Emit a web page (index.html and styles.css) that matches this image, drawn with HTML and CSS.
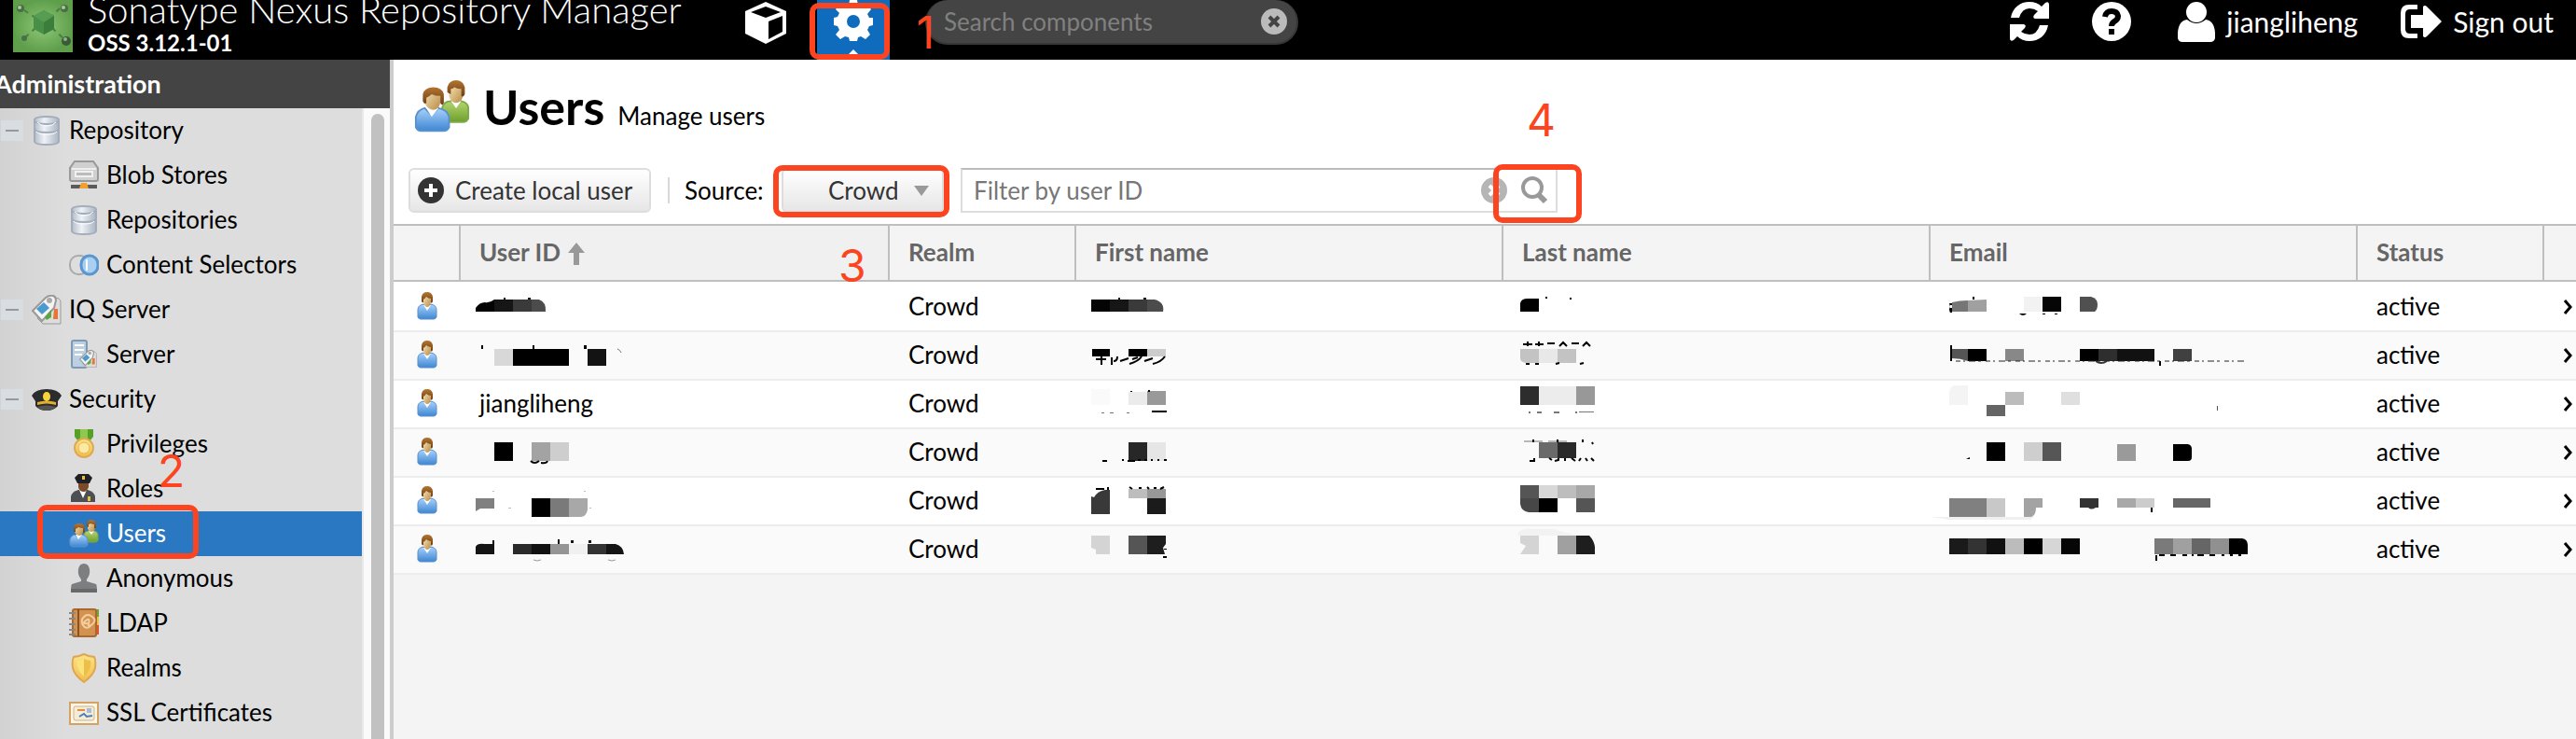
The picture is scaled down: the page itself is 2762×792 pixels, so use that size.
FILE: index.html
```html
<!DOCTYPE html>
<html lang="en">
<head>
<meta charset="utf-8">
<title>Users - Sonatype Nexus Repository Manager</title>
<link rel="stylesheet" href="styles.css">
</head>
<body>
<svg class="sprites" aria-hidden="true">
  <defs>
    <linearGradient id="hair" x1="0" y1="0" x2="0" y2="1"><stop offset="0" stop-color="#b5742f"/><stop offset="1" stop-color="#6b3f17"/></linearGradient>
    <linearGradient id="face" x1="0" y1="0" x2="1" y2="1"><stop offset="0" stop-color="#f7e6b8"/><stop offset="1" stop-color="#b88a45"/></linearGradient>
    <linearGradient id="blue" x1="0" y1="0" x2="0" y2="1"><stop offset="0" stop-color="#a9d2fb"/><stop offset="1" stop-color="#3e86d3"/></linearGradient>
    <linearGradient id="green" x1="0" y1="0" x2="0" y2="1"><stop offset="0" stop-color="#b4d66f"/><stop offset="1" stop-color="#6f9f2d"/></linearGradient>
    <linearGradient id="steel" x1="0" y1="0" x2="1" y2="0"><stop offset="0" stop-color="#b4bdc8"/><stop offset=".4" stop-color="#eef2f7"/><stop offset="1" stop-color="#aab4c1"/></linearGradient>
    <linearGradient id="gold" x1="0" y1="0" x2="0" y2="1"><stop offset="0" stop-color="#fbe48a"/><stop offset="1" stop-color="#f0bd4a"/></linearGradient>
    <radialGradient id="leaf"><stop offset="0" stop-color="#8fc878"/><stop offset="1" stop-color="#5f9f4c"/></radialGradient>
  </defs>
  <symbol id="i-user" viewBox="0 0 32 32">
    <path d="M6 28V20q0-5 6-6l4 4 4-4q6 1 6 6v8q-1 2-3 2H9q-2 0-3-2z" fill="url(#blue)" stroke="#5a90cc"/>
    <path d="M12 15h8l-4 6z" fill="#fff"/>
    <path d="M12 7q0-3 4-3t4 3v5q-1 5-4 5t-4-5z" fill="url(#face)"/>
    <path d="M10 11V6q1-5 6-5t6 5v5q-1 3-2 1V8q-3 0-5-2-1 2-3 3v3q-1 1-2-1z" fill="url(#hair)"/>
  </symbol>
  <symbol id="i-users" viewBox="0 0 32 32">
    <path d="M16 22v-5q1-4 5-4l3 3 3-3q4 1 4 4v6q-1 2-3 2H19z" fill="url(#green)" stroke="#7fa84a"/>
    <path d="M21 13h6l-3 4z" fill="#fff"/>
    <path d="M20 5q1-2 4-2t4 2v5q-1 4-4 4t-4-4z" fill="url(#face)"/>
    <path d="M19 8V5q1-4 5-4t5 4v4q-1 2-2 1V6q-2 0-4-1-1 1-2 1v3z" fill="url(#hair)"/>
    <path d="M1 28v-6q1-4 5-5l4 4 4-4q5 1 6 5v6q-1 2-3 2H4q-2 0-3-2z" fill="url(#blue)" stroke="#5a90cc"/>
    <path d="M7 17h7l-4 5z" fill="#fff"/>
    <path d="M6 9q1-3 4-3t5 3v5q-1 4-4 4t-5-4z" fill="url(#face)"/>
    <path d="M5 13V9q1-4 6-4t6 4v5q-1 2-2 0v-4q-3 0-5-1-1 1-3 2v3q-1 1-2-1z" fill="url(#hair)"/>
  </symbol>
  <symbol id="i-db" viewBox="0 0 32 32">
    <path d="M3 4q1-3 13-3t13 3v24q-1 3-13 3T3 28z" fill="url(#steel)" stroke="#a4aebb" stroke-width="2"/>
    <path d="M3 5q1 4 13 4t13-4M3 14q1 4 13 4t13-4" fill="none" stroke="#a4aebb" stroke-width="2"/>
    <path d="M5 17q2 3 11 3t11-3M6 7q3 4 10 4t10-4" fill="none" stroke="#fff"/>
  </symbol>
  <symbol id="i-tags" viewBox="0 0 32 32">
    <path d="M6 25l18-22q7 0 7 5v23H12z" fill="#ddd" stroke="#999"/>
    <path d="M1 17L15 3q4-3 8-2 3 1 3 5l-2 8-13 14z" fill="#f4f4f4" stroke="#999" stroke-width="2"/>
    <circle cx="19" cy="6" r="3" fill="#aaa"/>
    <path d="M5 15l8-7 6 6-8 7z" fill="#4a9ad0"/>
    <path d="M14 24l7-8v8l-5 3z" fill="#5ba640"/><path d="M24 15h4v11h-5z" fill="#e8743b"/>
  </symbol>
  <symbol id="i-go" viewBox="0 0 10 16">
    <path d="M2 1l6 7-6 7" fill="none" stroke="#000" stroke-width="3"/>
  </symbol>
</svg>

<header class="topbar">
  <div class="brand">
    <svg class="logo" viewBox="0 0 64 56" aria-hidden="true">
      <rect width="64" height="56" fill="url(#leaf)"/>
      <path d="M12 11l12 8M50 9l-8 8M13 40l10-9M42 30l14 13" stroke="#4a7f44" stroke-width="2" stroke-dasharray="5 5"/>
      <path d="M33 11l11 6v14l-11 6-11-6V17z" fill="#4a8f47"/><path d="M33 11l11 6-11 7-11-7z" fill="#569c52"/><path d="M33 24l11-7v14l-11 6z" fill="#3b7d3a"/>
      <circle cx="8" cy="9" r="4" fill="#4a6f46"/><circle cx="55" cy="9" r="4" fill="#4a6f46"/><circle cx="12" cy="41" r="3" fill="#4a6f46"/><circle cx="57" cy="44" r="5" fill="#3a5a38"/>
      <circle cx="7" cy="8" r="2" fill="#a9c9a0"/><circle cx="54" cy="8" r="2" fill="#a9c9a0"/><circle cx="56" cy="42" r="2" fill="#8fb088"/>
    </svg>
    <div class="names">
      <div class="product">Sonatype Nexus Repository Manager</div>
      <div class="version">OSS 3.12.1-01</div>
    </div>
  </div>
  <div class="modes">
    <button class="mode" aria-label="Browse">
      <svg viewBox="0 0 46 46" width="46" height="46"><path d="M23 1l22 10v24L23 46 1 35V11z" fill="#fff"/><path d="M23 6l16 6-16 6-16-6z" fill="#000"/><path d="M26 22l15-6v17l-15 8z" fill="#000"/></svg>
    </button>
    <button class="mode active" aria-label="Administration">
      <svg viewBox="0 0 42 44" width="42" height="44"><path fill="#fff" fill-rule="evenodd" d="M17 0h8l1 6 4 2 5-4 5 6-4 5 2 4h4v8l-4 1-2 4 3 5-5 5-5-3-3 1-1 4h-8l-1-4-4-1-5 3-5-5 4-5-2-4-4-1v-8l4-1 2-4-4-4 5-6 5 4 4-2zM21 16a7 7 0 1 0 0 14 7 7 0 1 0 0-14z"/></svg>
      <span class="pointer"></span>
      <span class="mark mark-mode"></span>
    </button>
    <span class="step step-1">1</span>
  </div>
  <div class="search">
    <input type="text" aria-label="Search components" placeholder="Search components">
    <button aria-label="Clear search"><svg viewBox="0 0 28 28" width="28" height="28"><circle cx="14" cy="14" r="14" fill="#bbb"/><path d="M9 9l10 10M19 9L9 19" stroke="#444" stroke-width="4"/></svg></button>
  </div>
  <div class="tools">
    <button aria-label="Refresh"><svg viewBox="0 0 42 44" width="42" height="44" fill="#fff"><path d="M1 18C3 7 11 1 21 1q8 0 13 5l4-4q4-2 4 2v15H27q-3-1-1-4l4-4q-4-3-9-3-8 0-11 10z"/><path d="M41 26C39 37 31 43 21 43q-8 0-13-5l-4 4q-4 2-4-2V25h15q3 1 1 4l-4 4q4 3 9 3 8 0 11-10z"/></svg></button>
    <button aria-label="Help"><svg viewBox="0 0 42 44" width="42" height="44"><circle cx="21" cy="22" r="21" fill="#fff"/><path d="M14 17q1-6 7-6t7 5q0 4-4 6-3 2-3 5" fill="none" stroke="#000" stroke-width="6"/><path d="M18 30h6v6h-6z"/></svg></button>
    <button><svg viewBox="0 0 40 44" width="40" height="44" fill="#fff"><ellipse cx="20" cy="12" rx="11" ry="11"/><path d="M10 20q10 8 20 0 9 1 10 14v6q-1 4-5 4H5q-4 0-5-4v-6q1-13 10-14z"/></svg>jiangliheng</button>
    <button><svg viewBox="0 0 44 36" width="44" height="36" fill="#fff"><path d="M18 0v5H10q-5 0-5 5v16q0 5 5 5h8v5H9q-9 0-9-9V9q0-9 9-9z"/><path d="M11 11h13V2q2-2 4 0l16 16-16 16q-2 2-4 0v-9H11z"/></svg>Sign out</button>
  </div>
</header>

<div class="workspace">
  <aside class="sidebar">
    <h2>Administration</h2>
    <div class="scroller">
      <nav aria-label="Administration">
        <ul class="tree">
          <li class="group"><button aria-label="Collapse Repository"></button><a href="#"><svg><use href="#i-db"/></svg><span>Repository</span></a></li>
          <li><a href="#"><svg viewBox="0 0 32 32"><path d="M6 1h20l5 7v12q0 2-2 2H3q-2 0-2-2V8z" fill="#d0d0d0" stroke="#999" stroke-width="2"/><path d="M3 9h26" stroke="#eee" stroke-width="2"/><path d="M7 12h18v5H7z" fill="#bbb" stroke="#f0f0f0" stroke-width="2"/><path d="M2 26h28v4H2z" fill="#5a5a5a"/><path d="M13 24h6l2 6H11z" fill="#f0a030"/></svg><span>Blob Stores</span></a></li>
          <li><a href="#"><svg><use href="#i-db"/></svg><span>Repositories</span></a></li>
          <li><a href="#"><svg viewBox="0 0 32 32"><rect x="1" y="6" width="20" height="20" rx="9" fill="#dedede" stroke="#aaa" stroke-width="2"/><rect x="13" y="6" width="18" height="20" rx="9" fill="#a9d0f2" stroke="#5b96d0" stroke-width="3"/><path d="M19 10v12" stroke="#fff" stroke-width="2"/></svg><span>Content Selectors</span></a></li>
          <li class="group"><button aria-label="Collapse IQ Server"></button><a href="#"><svg><use href="#i-tags"/></svg><span>IQ Server</span></a></li>
          <li><a href="#"><svg viewBox="0 0 32 32"><rect x="3" y="1" width="16" height="29" rx="2" fill="#bcd0e2" stroke="#7d99b4" stroke-width="2"/><path d="M6 6h10M6 11h10M6 16h8" stroke="#fff" stroke-width="2"/><use href="#i-tags" x="11" y="11" width="19" height="19"/></svg><span>Server</span></a></li>
          <li class="group"><button aria-label="Collapse Security"></button><a href="#"><svg viewBox="0 0 32 32"><path d="M0 12Q4 5 16 5t16 7l-4 6v5q-4 5-12 5T4 23v-5z" fill="#2c2c2e"/><path d="M6 19q10-3 20 0v3q-10-3-20 0z" fill="#e2b02c"/><ellipse cx="16" cy="13" rx="4" ry="5" fill="#f6d23d"/><path d="M6 24q10-3 20 0-4 4-10 4T6 24z" fill="#555"/></svg><span>Security</span></a></li>
          <li><a href="#"><svg viewBox="0 0 32 32"><path d="M6 0h20v8l-4 5H10L6 8z" fill="#57a028"/><path d="M12 0h8v10h-8z" fill="#8cc94e"/><circle cx="16" cy="20" r="10" fill="url(#gold)" stroke="#e0a850" stroke-width="2"/><circle cx="16" cy="20" r="6" fill="#fbe9a4" stroke="#e5b552"/></svg><span>Privileges</span></a></li>
          <li class="has-step"><a href="#"><svg viewBox="0 0 32 32"><path d="M2 30v-6q1-5 8-7h10q7 2 8 7v6z" fill="#4c4f54"/><path d="M11 17l4 9 4-9z" fill="#fff"/><path d="M10 8h11v6q-2 5-5 5-5 0-6-5z" fill="#7b4a28"/><path d="M6 4l4-4h11l4 4-3 6H9z" fill="#1f2126"/><path d="M14 2h3v4h-3zM20 24h3v5h-3z" fill="#e8c23a"/></svg><span>Roles</span></a><span class="step step-2">2</span></li>
          <li class="selected"><a href="#" aria-current="page"><svg><use href="#i-users"/></svg><span>Users</span></a><span class="mark mark-users"></span></li>
          <li><a href="#"><svg viewBox="0 0 32 32"><path d="M10 6q1-6 6-6t6 6-3 11v2l10 3q1 1 1 9H2q0-8 1-9l10-3v-2q-4-5-3-11z" fill="#7c7e80"/><path d="M2 27h28v4H2z" fill="#66686a"/></svg><span>Anonymous</span></a></li>
          <li><a href="#"><svg viewBox="0 0 32 32"><path d="M28 1h4v8h-4z" fill="#6aa83a"/><path d="M28 9h4v9h-4z" fill="#f0c040"/><path d="M28 18h4v10h-4z" fill="#e0542b"/><rect x="4" y="1" width="25" height="29" rx="2" fill="#d3924f" stroke="#a8692e" stroke-width="2"/><path d="M10 1v29" stroke="#8a5220" stroke-width="2"/><path d="M0 5h7M0 11h7M0 17h7M0 23h7M0 28h7" stroke="#888" stroke-width="2"/><path d="M23 19q-5 4-8-1t1-9 9 0 0 8-4 0 0-5-4 2 3 2" fill="none" stroke="#f3cfa0" stroke-width="2"/></svg><span>LDAP</span></a></li>
          <li><a href="#"><svg viewBox="0 0 32 32"><path d="M16 1l5 2 6 1q2 3 1 12-2 8-12 15Q6 24 4 16 3 7 5 4l6-1z" fill="url(#gold)" stroke="#dfa550" stroke-width="2"/><path d="M16 6q3 2 7 2 2 9-7 17z" fill="#edbe48"/><path d="M16 6q-3 2-7 2-2 9 7 17z" fill="#fbe27a"/></svg><span>Realms</span></a></li>
          <li><a href="#"><svg viewBox="0 0 32 32"><rect x="1" y="5" width="30" height="23" fill="#fdf6e6" stroke="#d3a265" stroke-width="2"/><rect x="5" y="9" width="22" height="15" rx="2" fill="#f6ecd4" stroke="#c9b48a"/><path d="M9 13h8" stroke="#e08b4a" stroke-width="2"/><path d="M19 11h5v5h-5z" fill="#a5bdd8"/><path d="M11 20l5-3 3 3 6-1" stroke="#4a7dc0" stroke-width="2" fill="none"/></svg><span>SSL Certificates</span></a></li>
        </ul>
      </nav>
      <div class="track"><div class="thumb"></div></div>
    </div>
  </aside>

  <main>
    <div class="heading">
      <svg class="feature"><use href="#i-users"/></svg>
      <h1>Users</h1>
      <p>Manage users</p>
    </div>
    <div class="toolbar">
      <button class="create"><svg viewBox="0 0 28 28" width="28" height="28"><circle cx="14" cy="14" r="14" fill="#333"/><path d="M14 7v14M7 14h14" stroke="#fff" stroke-width="4"/></svg>Create local user</button>
      <span class="divider"></span>
      <label for="source">Source:</label>
      <div class="source">
        <select id="source"><option>Crowd</option></select>
        <span class="caret"></span>
        <span class="mark mark-source"></span>
        <span class="step step-3">3</span>
      </div>
      <div class="filter">
        <input type="text" aria-label="Filter by user ID" placeholder="Filter by user ID">
        <button aria-label="Clear filter"><svg viewBox="0 0 28 28" width="28" height="28"><circle cx="14" cy="14" r="14" fill="#b5b5b5"/><path d="M9 9l10 10M19 9L9 19" stroke="#fff" stroke-width="4"/></svg></button>
        <button class="find" aria-label="Search"><svg viewBox="0 0 30 30" width="30" height="30" fill="none" stroke="#999"><circle cx="13" cy="12" r="10" stroke-width="4"/><path d="M20 20l7 7" stroke-width="6"/></svg><span class="mark mark-find"></span><span class="step step-4">4</span></button>
      </div>
    </div>
    <table>
      <colgroup><col class="c-icon"><col class="c-id"><col class="c-realm"><col><col><col><col class="c-status"><col class="c-go"></colgroup>
      <thead>
        <tr><th></th><th class="sorted">User ID <svg viewBox="0 0 18 24" width="18" height="24"><path d="M9 0l9 11h-6v13H6V11H0z" fill="#999"/></svg></th><th>Realm</th><th>First name</th><th>Last name</th><th>Email</th><th>Status</th><th></th></tr>
      </thead>
      <tbody>
        <tr>
          <td class="who"><svg><use href="#i-user"/></svg></td>
          <td class="hid"><svg><path fill="#040404" d="M16 30v-4q4-6 10-6 5 1 10-3v13z"/><path fill="#161616" d="M36 17h20v13H36zM46 15h2v2h-2zM72 15h3v2h-3z"/><path fill="#3a3a3a" d="M56 17h20v13H56z"/><path fill="#4c4c4c" d="M76 17h8q8 3 7 13H76z"/></svg></td>
          <td>Crowd</td>
          <td class="hid"><svg><path fill="#040404" d="M16 17h20v13H16z"/><path fill="#161616" d="M36 17h20v13H36zM45 15h2v2h-2zM72 15h3v2h-3z"/><path fill="#3a3a3a" d="M56 17h20v13H56z"/><path fill="#4c4c4c" d="M76 17h8q11 3 9 13H76z"/></svg></td>
          <td class="hid"><svg><path d="M18 30v-9q1-5 8-5h12v14zM45 14h2v2h-2zM71 15h2v2h-2z"/></svg></td>
          <td class="hid"><svg><path d="M20 21h3v2h-2v3h2v5h-2q-2-4 0-6zM45 14h2v3h-2zM95 32h8q-4 4-8 0zM120 32h3v1h-3zM133 32h3v1h-3z"/><path fill="#767676" d="M23 20q8-2 17-2v12H23z"/><path fill="#a0a0a0" d="M40 18l20-1v13H40z"/><path fill="#f2f2f2" d="M100 14h20v16h-20z"/><path fill="#060606" d="M120 14h20v16h-20z"/><path fill="#505050" d="M160 14h12q7 2 7 8t-3 8h-16z"/></svg></td>
          <td>active</td><td class="go"><svg><use href="#i-go"/></svg></td>
        </tr>
        <tr>
          <td class="who"><svg><use href="#i-user"/></svg></td>
          <td class="hid"><svg><path fill="#d8d8d8" d="M36 18h20v18H36z"/><path d="M56 18h60v18H56zM22 14h2v4h-2zM77 14h2v4h-2zM132 14h3v4h-3z"/><path fill="#131313" d="M136 18h20v18h-20z"/><path d="M168 18q3 1 4 4" fill="none" stroke="#777"/></svg></td>
          <td>Crowd</td>
          <td class="hid"><svg><path d="M17 18h19v8H17zM56 18h20v8H56z"/><path fill="#ccc" d="M76 18h20v8H76z"/><path d="M21 29h11M27 26v9M38 27v8M44 26q0 5-4 5M47 31l9-3M57 34q10-3 13-8M73 31l9-3M82 34q9-2 13-8M60 29l6-2" fill="none" stroke="#000" stroke-width="2"/></svg></td>
          <td class="hid"><svg><path fill="#c3c3c3" d="M18 18h20v15H24q-6-1-6-5zM58 18h20v15H58z"/><path fill="#e8e8e8" d="M38 18h20v15H38z"/><path d="M21 13h10M26 10v5M34 13h9M38 10v5M47 12h8M60 15l4-4 4 4M73 12h8M85 15l4-4 4 4M24 34h4M34 34h4M56 34l4-1M82 34l4-1" fill="none" stroke="#000" stroke-width="2"/></svg></td>
          <td class="hid"><svg><path d="M21 14h2v17h-2z"/><path fill="#555" d="M23 18h17v13q-8-3-17-3z"/><path d="M40 18h20v13H40zM160 18h20v13h-20zM245 31h2v5h-2z"/><path fill="#888" d="M80 18h20v13H80z"/><path fill="#2e2e2e" d="M180 18h20v13h-20z"/><path fill="#111" d="M200 18h40v13h-40z"/><path fill="#404040" d="M260 18h20v13h-20z"/><path d="M27 31h310" stroke="#222" stroke-dasharray="5 3 2 4 7 3 3 5"/><path d="M177 31q6 4 12 0" fill="none" stroke="#333" stroke-width="2"/></svg></td>
          <td>active</td><td class="go"><svg><use href="#i-go"/></svg></td>
        </tr>
        <tr>
          <td class="who"><svg><use href="#i-user"/></svg></td>
          <td>jiangliheng</td>
          <td>Crowd</td>
          <td class="hid"><svg><path fill="#fafafa" d="M16 9h20v17H16z"/><path fill="#ebebeb" d="M56 12h20v14H56z"/><path fill="#999" d="M76 11h20v15H76z"/><path d="M81 32h16v2H81zM58 11h2v1h-2zM77 10h2v2h-2z"/><path fill="#777" d="M27 34h3v1h-3zM36 34h4v1h-4zM54 34h3v1h-3z"/></svg></td>
          <td class="hid"><svg><path fill="#2d2d2d" d="M18 6h20v20H18z"/><path fill="#ececec" d="M38 6h40v20H38z"/><path fill="#989898" d="M78 6h20v20H78z"/><path fill="#777" d="M27 33h2v2h-2zM36 33h5v2h-5zM54 33h6v2h-6zM77 33h2v2h-2zM81 33h16v1H81z"/></svg></td>
          <td class="hid"><svg><path fill="#f4f4f4" d="M20 26V12q1-6 6-7h14v21z"/><path fill="#bcbcbc" d="M80 12h20v14H80z"/><path fill="#656565" d="M60 26h20v12H60z"/><path fill="#dfdfdf" d="M140 12h20v14h-20z"/><path fill="#555" d="M307 27h1v5h-1z"/></svg></td>
          <td>active</td><td class="go"><svg><use href="#i-go"/></svg></td>
        </tr>
        <tr>
          <td class="who"><svg><use href="#i-user"/></svg></td>
          <td class="hid"><svg><path d="M36 14h20v20H36z"/><path fill="#a3a3a3" d="M76 14h20v20H76z"/><path fill="#cecece" d="M96 14h20v20H96z"/><path d="M75 34q4 4 9 0M86 36q6 1 7-2" fill="none" stroke="#000" stroke-width="2"/></svg></td>
          <td>Crowd</td>
          <td class="hid"><svg><path fill="#272727" d="M56 14h20v20H56z"/><path fill="#e6e6e6" d="M76 14h20v20H76z"/><path d="M28 34h5M49 33h2M55 34h8M66 33h3M73 33h3M80 33h2M87 33h2M94 33h3" stroke="#000" stroke-width="2"/></svg></td>
          <td class="hid"><svg><path fill="#6a6a6a" d="M38 14h20v17H38z"/><path fill="#2a2a2a" d="M58 14h20v17H58z"/><path d="M22 13h20M48 13h20" stroke="#777"/><path d="M32 11v3M58 11v3M85 11v3M95 14l1 2M28 34h5v-3M49 31l3 2M55 34l4-1v-2M66 31v3M73 31l4 3M81 34l2-3M88 31l2 3M94 31l3 3" fill="none" stroke="#000" stroke-width="2"/></svg></td>
          <td class="hid"><svg><path d="M60 14h20v20H60zM260 16h16q4 1 4 5v9q0 4-4 4h-16zM38 32l4-2v2z"/><path fill="#cecece" d="M100 14h20v20h-20z"/><path fill="#565656" d="M120 14h20v20h-20z"/><path fill="#9a9a9a" d="M200 16h20v18h-20z"/></svg></td>
          <td>active</td><td class="go"><svg><use href="#i-go"/></svg></td>
        </tr>
        <tr>
          <td class="who"><svg><use href="#i-user"/></svg></td>
          <td class="hid"><svg><path fill="#808080" d="M16 22h20v11H21l-5 3z"/><path d="M76 22h20v20H76z"/><path fill="#7a7a7a" d="M96 22h20v20H96z"/><path fill="#a8a8a8" d="M116 22h20v12q-1 7-7 8h-13z"/><path fill="#bbb" d="M34 14h2v1h-2zM51 32h3v1h-3zM132 14h2v1h-2zM138 32h2v1h-2z"/></svg></td>
          <td>Crowd</td>
          <td class="hid"><svg><path fill="#393939" d="M16 20l3 1q4-7 12-8h5v26H16z"/><path fill="#bdbdbd" d="M56 12h20v10H56z"/><path fill="#989898" d="M76 12h20v10H76z"/><path fill="#1b1b1b" d="M76 22h20v17H76z"/><path d="M21 12h9M34 10v3M57 10l3 2M67 11h3M76 10l2 2M83 11h3M90 12l4-2" stroke="#000" stroke-width="2"/></svg></td>
          <td class="hid"><svg><path fill="#555" d="M18 8h20v14H18zM78 22h20v15H78z"/><path fill="#d8d8d8" d="M38 8h20v14H38z"/><path fill="#bdbdbd" d="M58 8h20v14H58z"/><path fill="#a8a8a8" d="M78 8h20v14H78z"/><path fill="#474747" d="M18 22h20v15H27q-8-1-9-9z"/><path d="M38 22h20v15H38z"/></svg></td>
          <td class="hid"><svg><path fill="#808080" d="M20 22h40v20H20z"/><path fill="#c8c8c8" d="M60 22h20v20H60z"/><path fill="#a3a3a3" d="M100 22h20v10h-7q0 8-5 10h-8z"/><path fill="#333" d="M160 22h20v10h-3q-5 3-8 0h-9z"/><path fill="#a8a8a8" d="M200 22h20v10h-20z"/><path fill="#ccc" d="M220 22h20v10h-20z"/><path fill="#666" d="M260 22h40v10h-40z"/><path d="M236 32h2v5h-2z"/><path fill="#f0f0f0" d="M0 42h111l-4 3H20z"/></svg></td>
          <td>active</td><td class="go"><svg><use href="#i-go"/></svg></td>
        </tr>
        <tr>
          <td class="who"><svg><use href="#i-user"/></svg></td>
          <td class="hid"><svg><path fill="#141414" d="M16 30v-8q2-4 9-3h11v11zM34 15h2v4h-2zM104 14h2v5h-2zM118 15h3v3h-3zM137 15h3v3h-3zM156 19h10q8 2 9 11h-19z"/><path fill="#2a2a2a" d="M56 19h20v11H56z"/><path fill="#111" d="M76 19h20v11H76z"/><path fill="#959595" d="M96 19h20v11H96z"/><path fill="#f0f0f0" d="M116 19h20v11h-20z"/><path fill="#333" d="M136 19h20v11h-20z"/><path d="M78 36q4 2 8 0M158 36q4 2 8 0" fill="none" stroke="#999"/></svg></td>
          <td>Crowd</td>
          <td class="hid"><svg><path fill="#d4d4d4" d="M16 10h20v20H21v-5l-5-2z"/><path fill="#555" d="M56 10h20v20H56z"/><path fill="#1e1e1e" d="M76 10h20v9l-3 4 2 7H76z"/><path d="M93 32h4v2h-4zM94 24h3v1h-3z"/></svg></td>
          <td class="hid"><svg><path fill="#f2f2f2" d="M15 10q2-7 9-7h30l24 7z"/><path fill="#d4d4d4" d="M18 10h20v20H18l6-9-6-3z"/><path fill="#a0a0a0" d="M58 10h20v20H58z"/><path fill="#1e1e1e" d="M78 10h14q5 5 6 12v8H78z"/></svg></td>
          <td class="hid"><svg><path fill="#1a1a1a" d="M20 13h20v17H20z"/><path fill="#333" d="M40 13h20v17H40z"/><path fill="#111" d="M60 13h20v17H60z"/><path fill="#bcbcbc" d="M80 13h20v17H80z"/><path d="M100 13h20v17h-20zM320 13h14q6 1 6 7v10h-20z"/><path fill="#d6d6d6" d="M120 13h20v17h-20z"/><path fill="#060606" d="M140 13h20v17h-20z"/><path fill="#7a7a7a" d="M240 13h20v17h-20z"/><path fill="#a0a0a0" d="M260 13h20v17h-20z"/><path fill="#666" d="M280 13h20v17h-20z"/><path fill="#909090" d="M300 13h20v17h-20z"/><path d="M242 31v6M245 31h6M257 31h6M270 31h5M280 31h2M286 31h7M299 31h6M312 31h3M321 31h3M330 31h3" stroke="#000" stroke-width="2"/></svg></td>
          <td>active</td><td class="go"><svg><use href="#i-go"/></svg></td>
        </tr>
      </tbody>
    </table>
  </main>
</div>
</body>
</html>
```
FILE: styles.css
```css
:root {
  --red: #fc4520;
  --line: #bfbfbf;
}
* { box-sizing: border-box; }
body {
  margin: 0;
  height: 100vh;
  display: flex;
  flex-direction: column;
  overflow: hidden;
  background: #f4f4f4;
  color: #000;
  font: 26px/32px Lato, "Open Sans", sans-serif;
}
h1, h2, p, ul { margin: 0; padding: 0; }
ul { list-style: none; }
a { color: inherit; text-decoration: none; }
button, input, select { font: inherit; color: inherit; border: 0; padding: 0; margin: 0; background: none; }
svg { display: block; flex: none; }
.sprites { position: absolute; width: 0; height: 0; }

/* Numbered call-outs drawn over the controls */
.mark { position: absolute; border: 6px solid var(--red); border-radius: 10px; pointer-events: none; }
.step { position: absolute; color: var(--red); font: 400 48px/48px Inter, "Liberation Sans", sans-serif; pointer-events: none; }

/* Top bar */
.topbar { height: 64px; flex: none; display: flex; align-items: flex-start; background: #000; color: #fff; }
.brand { display: flex; flex: none; width: 782px; padding-left: 14px; gap: 16px; }
.logo { width: 64px; height: 56px; }
.product { font-size: 40px; font-weight: 300; line-height: 20px; white-space: nowrap; }
.version { margin-top: 10px; font-size: 24px; font-weight: 700; }
.modes { position: relative; display: flex; flex: none; width: 210px; gap: 16px; }
.mode { position: relative; width: 78px; height: 64px; display: flex; justify-content: center; padding-top: 1px; }
.mode.active { background: #0f6cbd; padding-top: 0; }
.pointer { position: absolute; bottom: 5px; left: 33px; border: 6px solid transparent; border-top: 0; border-bottom-color: #fff; }
.mark-mode { inset: 3px 0 0 -8px; }
.step-1 { top: 11px; right: -10px; z-index: 1; }
.search { display: flex; align-items: center; width: 400px; height: 48px; padding: 0 10px 0 18px; border: 2px solid #383838; border-top: 0; border-radius: 24px; background: #444; }
.search input { flex: 1; min-width: 0; outline: 0; }
.search input::placeholder { color: #808080; }
.tools { margin-left: auto; padding-right: 24px; display: flex; gap: 46px; font-size: 30px; }
.tools button { display: flex; align-items: center; gap: 12px; height: 46px; }
.tools button:nth-child(3) { margin-left: 4px; }

/* Sidebar */
.workspace { flex: 1; min-height: 0; display: flex; }
.sidebar { flex: none; width: 422px; display: flex; flex-direction: column; border-right: 4px solid #ccc; }
.sidebar h2 { flex: none; background: #444; color: #fff; font-size: 27px; line-height: 52px; text-indent: -6px; }
.scroller { flex: 1; min-height: 0; display: flex; overflow: hidden; }
nav { flex: 1; background: linear-gradient(90deg, #d2d2d2, #ddd 70px); }
.track { width: 30px; padding: 6px 6px 0 8px; background: #fafafa; border-left: 2px solid #e8e8e8; }
.thumb { height: 110%; border-radius: 8px; background: #c1c1c1; }
.tree li { position: relative; height: 48px; padding-left: 74px; display: flex; align-items: center; }
.tree .group { padding-left: 1px; gap: 9px; }
.tree a { display: flex; align-items: center; gap: 8px; }
.tree a span { padding-bottom: 2px; }
.tree a svg { width: 32px; height: 32px; }
.group button { width: 24px; height: 22px; background: linear-gradient(#999, #999) center / 14px 2px no-repeat #d8dde1; }
.tree .selected { background: #2b78c2; color: #fff; }
.tree .has-step { z-index: 1; }
.step-2 { top: -19px; left: 169px; }
.mark-users { inset: -7px 175px -3px 40px; }

/* Main panel */
main { flex: 1; min-width: 0; background: linear-gradient(#fff, #fff) top / 100% 180px no-repeat; }
.heading { display: flex; align-items: baseline; height: 116px; padding: 20px 22px 0; gap: 14px; }
.feature { width: 60px; height: 60px; align-self: flex-start; }
h1 { font-size: 52px; line-height: 60px; }
.toolbar { display: flex; align-items: center; height: 60px; padding: 0 16px 12px; }
.create, .source select { height: 48px; border: 2px solid #ddd; border-radius: 6px; background: linear-gradient(#fff, #e6e6e6); color: #333; }
.create { display: flex; align-items: center; gap: 12px; width: 260px; padding: 0 8px; white-space: nowrap; }
.divider { width: 2px; height: 28px; margin: 0 16px 0 18px; background: #d8d8d8; }
.toolbar label { width: 104px; }
.source { position: relative; width: 174px; }
.source select { appearance: none; width: 100%; padding: 0 48px; text-align: right; }
.caret { position: absolute; top: 19px; right: 16px; border: 8px solid transparent; border-top: 11px solid #999; border-bottom: 0; }
.mark-source { inset: -3px -6px -5px -9px; }
.step-3 { top: 81px; left: 61px; }
.filter { display: flex; align-items: center; width: 640px; height: 48px; margin-left: 18px; padding: 0 8px 0 12px; border: 2px solid #ddd; border-top-color: #bbb; background: #fff; }
.filter input { flex: 1; min-width: 0; outline: 0; }
.filter input::placeholder { color: #777; }
.filter .find { position: relative; margin-left: 14px; }
.mark-find { inset: -13px -36px -20px -29px; }
.step-4 { top: -84px; left: 7px; }

/* Grid */
table { width: 100%; table-layout: fixed; border-collapse: separate; border-spacing: 0; }
.c-icon { width: 72px; }
.c-id { width: 460px; }
.c-realm, .c-status { width: 200px; }
.c-go { width: 34px; }
th { height: 62px; padding: 0 20px 3px; border: solid var(--line); border-width: 2px 2px 2px 0; background: #f4f4f4; color: #666; text-align: left; white-space: nowrap; }
th:last-child { border-right: 0; }
th svg { display: inline-block; vertical-align: -4px; margin-left: 2px; }
.sorted { background: #f0f0f0; }
td { height: 52px; padding: 0 20px 3px; border-bottom: 2px solid #ececec; background: #fff; }
tbody tr:first-child td { border-top: 2px solid #fff; height: 54px; }
tbody tr:nth-child(even) td { background: #fafafa; }
.who svg { width: 32px; height: 32px; }
.hid { padding: 0; vertical-align: top; }
.hid svg { width: 100%; height: 50px; }
.go { padding: 0 4px 0 0; }
.go svg { width: 10px; height: 16px; margin-left: auto; }
```
